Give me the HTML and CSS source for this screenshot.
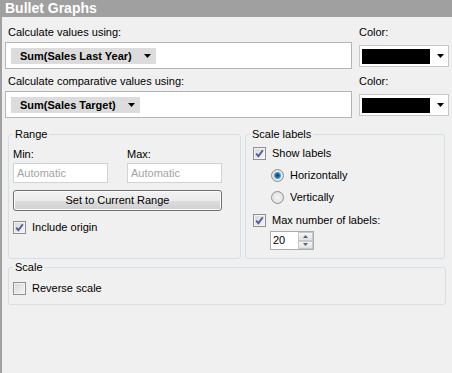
FILE: index.html
```html
<!DOCTYPE html>
<html>
<head>
<meta charset="utf-8">
<title>Bullet Graphs</title>
<link rel="stylesheet" href="styles.css">
</head>
<body>
<div class="panel">
  <div class="title">Bullet Graphs</div>
  <div class="content">
    <div class="measures">
      <div class="lbl lbl-indent">Calculate values using:</div>
      <div class="lbl">Color:</div>
      <div class="field-box">
        <span class="pill">Sum(Sales Last Year)<svg class="caret" width="7" height="4" viewBox="0 0 7 4"><polygon points="0,0 7,0 3.5,4" fill="#000"/></svg></span>
      </div>
      <div class="color-box">
        <span class="swatch"></span>
        <svg class="caret caret-color" width="7" height="4" viewBox="0 0 7 4"><polygon points="0,0 7,0 3.5,4" fill="#000"/></svg>
      </div>
      <div class="lbl lbl-indent">Calculate comparative values using:</div>
      <div class="lbl">Color:</div>
      <div class="field-box">
        <span class="pill">Sum(Sales Target)<svg class="caret" width="7" height="4" viewBox="0 0 7 4"><polygon points="0,0 7,0 3.5,4" fill="#000"/></svg></span>
      </div>
      <div class="color-box">
        <span class="swatch"></span>
        <svg class="caret caret-color" width="7" height="4" viewBox="0 0 7 4"><polygon points="0,0 7,0 3.5,4" fill="#000"/></svg>
      </div>
    </div>

    <div class="groups">
      <fieldset class="group range">
        <legend>Range</legend>
        <div class="range-body">
          <div class="range-grid">
            <div class="small-lbl">Min:</div>
            <div class="small-lbl">Max:</div>
            <div class="textbox">Automatic</div>
            <div class="textbox">Automatic</div>
          </div>
          <div class="button">Set to Current Range</div>
          <div class="check-row origin-row">
            <span class="check checked"><svg width="11" height="11" viewBox="0 0 11 11"><path d="M2.2 5.6 L4.4 8.2 L8.8 2.2" fill="none" stroke="#4b5e96" stroke-width="1.9"/></svg></span>
            <span>Include origin</span>
          </div>
        </div>
      </fieldset>

      <fieldset class="group labels">
        <legend>Scale labels</legend>
        <div class="labels-body">
          <div class="check-row show-row">
            <span class="check checked"><svg width="11" height="11" viewBox="0 0 11 11"><path d="M2.2 5.6 L4.4 8.2 L8.8 2.2" fill="none" stroke="#4b5e96" stroke-width="1.9"/></svg></span>
            <span>Show labels</span>
          </div>
          <div class="check-row radio-row">
            <span class="radio selected"></span>
            <span>Horizontally</span>
          </div>
          <div class="check-row radio-row">
            <span class="radio"></span>
            <span>Vertically</span>
          </div>
          <div class="check-row max-row">
            <span class="check checked"><svg width="11" height="11" viewBox="0 0 11 11"><path d="M2.2 5.6 L4.4 8.2 L8.8 2.2" fill="none" stroke="#4b5e96" stroke-width="1.9"/></svg></span>
            <span>Max number of labels:</span>
          </div>
          <div class="spin">
            <span class="spin-val">20</span>
            <span class="spin-btns">
              <span class="spin-btn"><svg width="5" height="3" viewBox="0 0 5 3"><polygon points="0,3 5,3 2.5,0" fill="#4d6185"/></svg></span>
              <span class="spin-btn"><svg width="5" height="3" viewBox="0 0 5 3"><polygon points="0,0 5,0 2.5,3" fill="#4d6185"/></svg></span>
            </span>
          </div>
        </div>
      </fieldset>
    </div>

    <fieldset class="group scale">
      <legend>Scale</legend>
      <div class="scale-body">
        <div class="check-row">
          <span class="check"></span>
          <span>Reverse scale</span>
        </div>
      </div>
    </fieldset>
  </div>
</div>
</body>
</html>
```

FILE: styles.css
```css
html, body {
  margin: 0;
  padding: 0;
}

body {
  background: #f0f0f0;
  font-family: "Liberation Sans", Arial, sans-serif;
  font-size: 11px;
  color: #000;
}

.panel {
  height: 373px;
  box-sizing: border-box;
  border-left: 2px solid #a0a0a0;
}

.title {
  height: 17px;
  line-height: 17px;
  background: #a0a0a0;
  color: #fff;
  font-size: 14px;
  font-weight: bold;
  padding-left: 3px;
}

.content {
  padding: 0 3px;
}

.measures {
  display: grid;
  grid-template-columns: 347px 90px;
  column-gap: 7px;
  padding-top: 9px;
}

.lbl {
  line-height: 13px;
  height: 13px;
  margin-bottom: 3px;
}

.lbl-indent {
  padding-left: 3px;
}

.field-box {
  box-sizing: border-box;
  height: 27px;
  margin-bottom: 6px;
  border: 1px solid #b4b4b4;
  background: #fff;
  display: flex;
  align-items: center;
  padding-left: 5px;
}

.pill {
  display: inline-flex;
  align-items: center;
  height: 16px;
  background: #dcdcdc;
  font-weight: bold;
  padding: 0 5px 0 9px;
}

.caret {
  display: block;
  margin-left: 12px;
}

.color-box {
  box-sizing: border-box;
  height: 22px;
  margin-top: 3px;
  border: 1px solid #c8c8c8;
  background: #fff;
  display: flex;
  align-items: center;
  padding-left: 2px;
}

.swatch {
  display: block;
  width: 68px;
  height: 15px;
  background: #000;
}

.caret-color {
  margin-left: 7px;
}

.groups {
  display: grid;
  grid-template-columns: 233px 200px;
  column-gap: 4px;
  margin: 4px 0 0 3px;
}

.group {
  margin: 0;
  padding: 0;
  min-width: 0;
  border: 1px solid #d5dfe5;
  border-radius: 3px;
}

.group legend {
  line-height: 13px;
  padding: 0 2px;
  margin-left: 4px;
}

.range-body {
  padding: 7px 0 0 4px;
}

.range-grid {
  display: grid;
  grid-template-columns: 95px 95px;
  column-gap: 19px;
}

.small-lbl {
  line-height: 13px;
  height: 13px;
  margin-bottom: 2px;
}

.textbox {
  box-sizing: border-box;
  height: 20px;
  line-height: 18px;
  border: 1px solid #cfd3d8;
  background: #fff;
  color: #a3a3a3;
  padding-left: 3px;
}

.button {
  box-sizing: border-box;
  width: 209px;
  height: 21px;
  margin-top: 7px;
  line-height: 19px;
  text-align: center;
  border: 1px solid #707070;
  border-radius: 3px;
  background: linear-gradient(#f2f2f2 0%, #ebebeb 50%, #dddddd 51%, #cfcfcf 100%);
  box-shadow: inset 0 0 0 1px #fcfcfc;
}

.check-row {
  display: flex;
  align-items: center;
  height: 13px;
  line-height: 13px;
}

.check {
  box-sizing: border-box;
  width: 13px;
  height: 13px;
  flex: none;
  border: 1px solid #8f8f8f;
  background: linear-gradient(135deg, #d4d6d9 0%, #f6f6f6 100%);
  box-shadow: inset 0 0 0 1px #f4f4f4;
  margin-right: 6px;
  display: flex;
  align-items: center;
  justify-content: center;
}

.check svg {
  display: block;
}

.origin-row {
  margin-top: 10px;
}

.labels-body {
  padding: 6px 0 8px 7px;
}

.radio-row {
  margin-top: 9px;
  padding-left: 18px;
}

.radio {
  box-sizing: border-box;
  width: 13px;
  height: 13px;
  flex: none;
  border-radius: 50%;
  border: 1px solid #8f8f8f;
  background: radial-gradient(circle at 50% 50%, #f6f6f6 0%, #d9dadc 100%);
  margin-right: 6px;
}

.radio.selected {
  background:
    radial-gradient(circle at 50% 50%, #0d3a66 0px, #1d6eae 2px, #7cc0ea 3.5px, rgba(255,255,255,0) 4px),
    radial-gradient(circle at 50% 50%, #f6f6f6 0%, #d9dadc 100%);
}

.max-row {
  margin-top: 10px;
}

.spin {
  box-sizing: border-box;
  display: flex;
  width: 44px;
  height: 19px;
  margin: 4px 0 0 17px;
  border: 1px solid #abadb3;
  background: #fff;
}

.spin-val {
  flex: 1;
  line-height: 17px;
  padding-left: 2px;
}

.spin-btns {
  display: flex;
  flex-direction: column;
  width: 15px;
}

.spin-btn {
  flex: 1;
  box-sizing: border-box;
  border: 1px solid #c6c8cc;
  background: linear-gradient(#f6f6f6, #e1e1e1);
  display: flex;
  align-items: center;
  justify-content: center;
}

.scale {
  width: 438px;
  box-sizing: border-box;
  margin: 2px 0 0 3px;
}

.scale-body {
  padding: 8px 0 9px 4px;
}
```
